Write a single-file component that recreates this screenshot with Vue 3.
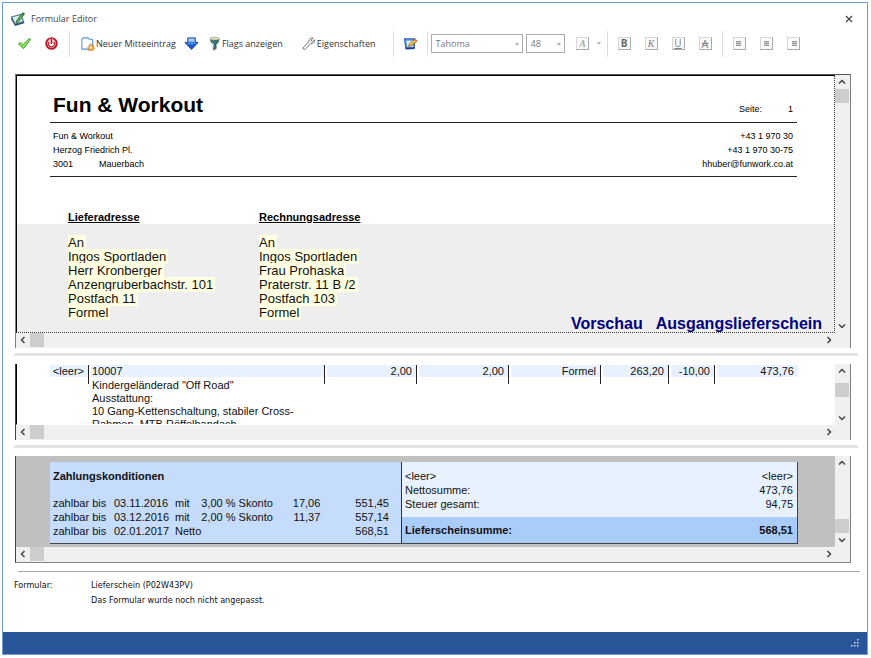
<script setup>
import { ref } from 'vue'

const fontName = ref('Tahoma')
const fontSize = ref('48')

const delivery = ['An', 'Ingos Sportladen', 'Herr Kronberger', 'Anzengruberbachstr. 101', 'Postfach 11', 'Formel']
const billing = ['An', 'Ingos Sportladen', 'Frau Prohaska', 'Praterstr. 11 B /2', 'Postfach 103', 'Formel']

const details = [
  'Kindergeländerad "Off Road"',
  'Ausstattung:',
  '10 Gang-Kettenschaltung, stabiler Cross-',
  'Rahmen, MTB Röffelbandach'
]

const terms = [
  { date: '03.11.2016', kind: 'mit', rate: '3,00 % Skonto', discount: '17,06', amount: '551,45' },
  { date: '03.12.2016', kind: 'mit', rate: '2,00 % Skonto', discount: '11,37', amount: '557,14' },
  { date: '02.01.2017', kind: 'Netto', rate: '', discount: '', amount: '568,51' }
]

const styleButtons = [
  { glyph: 'B', cls: 'bold', label: 'Fett' },
  { glyph: 'K', cls: 'italic', label: 'Kursiv' },
  { glyph: 'U', cls: 'under', label: 'Unterstrichen' },
  { glyph: 'A', cls: 'strike', label: 'Durchgestrichen' }
]
const alignButtons = [
  { x: 2, label: 'Linksbündig' },
  { x: 3, label: 'Zentriert' },
  { x: 4, label: 'Rechtsbündig' }
]
</script>

<template>
  <main class="window">
    <header class="titlebar">
      <svg class="app-icon" viewBox="0 0 16 16" aria-hidden="true">
        <path d="M1.500 6 10.500 3.500l3 7L5 13z" fill="#dcecf0" stroke="#4f7a8a" stroke-width="1.200" />
        <path d="M1.500 6.500 5 13.300l9-2.600.3 1.500L5 15 1 8z" fill="#2f5364" />
        <path d="M6.500 9.800 11.500 3l2 1.400-5 6.300-2.500 1z" fill="#5eb45a" stroke="#2c6a3a" stroke-width=".8" />
        <path d="m11.500 3 1.300-1.800 2.400 1.500-1.700 1.700z" fill="#2e6f45" />
      </svg>
      <h1>Formular Editor</h1>
      <button class="close" aria-label="Schließen">
        <svg viewBox="0 0 8 8"><path d="m1 1 6 6M7 1 1 7" stroke="#444" stroke-width="1.200" /></svg>
      </button>
    </header>

    <nav class="toolbar" aria-label="Werkzeuge">
      <button class="tool" aria-label="Übernehmen">
        <svg viewBox="0 0 16 16"><path d="m1.500 8.500 2.200-1.700 2.800 2.500L13 2.500l1.500 1.200L7 13.500z" fill="#8be35c" stroke="#2f9a2b" stroke-width="1" stroke-linejoin="round" /></svg>
      </button>
      <button class="tool" aria-label="Beenden">
        <svg viewBox="0 0 16 16">
          <circle cx="8" cy="8" r="5.600" fill="#fff" stroke="#b81e2c" stroke-width="2.200" />
          <path d="M5.700 6a3.200 3.200 0 1 0 4.600 0" fill="none" stroke="#c9212f" stroke-width="1.300" />
          <path d="M8 3v5.500" stroke="#fff" stroke-width="3.600" />
          <path d="M8 2.500v6" stroke="#b81e2c" stroke-width="1.900" />
        </svg>
      </button>
      <span class="sep first"></span>
      <button class="tool text">
        <svg viewBox="0 0 16 16">
          <path d="M2 14V3.500L3.500 2h5L10 3.500h3.500V14z" fill="#fbfdff" stroke="#5a93cf" stroke-width="1.100" stroke-linejoin="round" />
          <path d="m11.500 8 1.100 2 2.200-.5-.5 2.200 1.700 1.300-2 1-.1 2-2.400-.9-2.300.9.200-2.300-1.700-1.200 2-1-.3-2 1.700.5z" fill="#eda33b" stroke="#c97b1c" stroke-width=".5" />
          <circle cx="11.600" cy="12.300" r="1.300" fill="#fff3c9" />
        </svg>
        <span>Neuer Mitteeintrag</span>
      </button>
      <button class="tool narrow" aria-label="Nach unten">
        <svg viewBox="0 0 16 16">
          <path d="M4 2h8v5h3L8 14.300 1 7h3z" fill="#3f86ea" stroke="#173f9c" stroke-width="1" stroke-linejoin="round" />
          <path d="M4.700 2.700h6.600v3.300H4.700z" fill="#a5d0ff" />
          <path d="m3 8.300 5 1.500 5-1.500-5 5.200z" fill="#1b50c0" />
        </svg>
      </button>
      <button class="tool text flags">
        <svg viewBox="0 0 16 16">
          <path d="M3.500 3h9.500l-.7 3.500L9.800 9v4.500L6.800 15V9L4.200 6.500z" fill="#33706d" stroke="#2b5553" stroke-width=".6" />
          <path d="M6 7.500V4.500l1.200 4.500v5z" fill="#9cd0ca" />
          <ellipse cx="8.200" cy="2.800" rx="5" ry="1.500" fill="#e4e0b8" stroke="#7f8f82" stroke-width=".6" />
        </svg>
        <span>Flags anzeigen</span>
      </button>
      <button class="tool text props">
        <svg viewBox="0 0 16 16"><path d="M13 2.200 10.800 4.400l.4 1.300 1.300.4L14.500 4c.6 2.500-1.700 4.700-4.200 4l-5.700 6c-1.400 1.200-3.300-.7-2-2.100L8.500 6.300C7.800 3.800 10.500 1.300 13 2.200z" fill="#fff" stroke="#666" stroke-width="1" stroke-linejoin="round" /></svg>
        <span>Eigenschaften</span>
      </button>
      <span class="sep mid"></span>
      <button class="tool" aria-label="Bearbeiten">
        <svg viewBox="0 0 16 16">
          <path d="M1.500 3h11.300l-1 10.500-8.600.3z" fill="#5c9bea" stroke="#1d4fa3" stroke-width="1" />
          <path d="M3.500 5h7.500l-.6 6.500H4.700z" fill="#e7f2ff" />
          <path d="m3 14.200 9.300-.6.200-1.700-9.700.4z" fill="#1d3f88" />
          <path d="m6 11 .7-2.700 6.300-5 1.900 2.200-6.300 5z" fill="#f6c245" stroke="#8b5a12" stroke-width=".8" />
          <path d="m12 4 1.400-1.200 1.900 2.200-1.400 1.200z" fill="#e06d4b" />
        </svg>
      </button>
      <span class="sep"></span>
      <label class="combo wide">
        <select v-model="fontName" aria-label="Schriftart"><option>Tahoma</option></select>
        <i class="caret"></i>
      </label>
      <label class="combo small">
        <select v-model="fontSize" aria-label="Schriftgröße"><option>48</option></select>
        <i class="caret"></i>
      </label>
      <button class="tool color" aria-label="Schriftfarbe"><span class="box color-glyph">A</span></button>
      <button class="drop" aria-label="Farbauswahl"><i class="caret"></i></button>
      <span class="sep"></span>
      <button v-for="b in styleButtons" :key="b.cls" class="tool" :aria-label="b.label">
        <span class="box" :class="b.cls">{{ b.glyph }}</span>
      </button>
      <span class="sep"></span>
      <button v-for="b in alignButtons" :key="b.x" class="tool" :aria-label="b.label">
        <span class="box">
          <svg class="lines" viewBox="0 0 11 11">
            <path :d="`M${b.x} 3h5v5h-5z`" fill="#ccc" />
            <path :d="`M${b.x} 3.500h5M${b.x} 5.500h5M${b.x} 7.500h5`" stroke="#999" />
          </svg>
        </span>
      </button>
    </nav>

    <section class="pane pane-head">
      <div class="view head-view">
        <div class="sheet">
          <div class="company">
            <h2>Fun &amp; Workout</h2>
            <p class="page-no"><span>Seite:</span><span>1</span></p>
          </div>
          <div class="contact">
            <div>
              <p>Fun &amp; Workout</p>
              <p>Herzog Friedrich Pl.</p>
              <p><span class="zip">3001</span>Mauerbach</p>
            </div>
            <div class="right">
              <p>+43 1 970 30</p>
              <p>+43 1 970 30-75</p>
              <p>hhuber@funwork.co.at</p>
            </div>
          </div>
          <div class="labels">
            <h3>Lieferadresse</h3>
            <h3>Rechnungsadresse</h3>
          </div>
        </div>
        <div class="addresses">
          <ul><li v-for="l in delivery" :key="l"><mark>{{ l }}</mark></li></ul>
          <ul><li v-for="l in billing" :key="l"><mark>{{ l }}</mark></li></ul>
          <p class="preview"><span>Vorschau</span><span>Ausgangslieferschein</span></p>
        </div>
      </div>
      <div class="vbar">
        <button aria-label="Nach oben"><svg viewBox="0 0 8 8"><path d="m1 5.500 3-3 3 3" /></svg></button>
        <span class="thumb"></span>
        <span class="track"></span>
        <button aria-label="Nach unten"><svg viewBox="0 0 8 8"><path d="m1 2.500 3 3 3-3" /></svg></button>
      </div>
      <div class="hbar">
        <button aria-label="Nach links"><svg viewBox="0 0 8 8"><path d="m5.500 1-3 3 3 3" /></svg></button>
        <span class="thumb"></span>
        <span class="track"></span>
        <button aria-label="Nach rechts"><svg viewBox="0 0 8 8"><path d="m2.500 1 3 3-3 3" /></svg></button>
      </div>
    </section>

    <div class="splitter"></div>

    <section class="pane pane-items">
      <div class="view items-view">
        <table class="items">
          <colgroup>
            <col class="c-flag"><col><col class="c-num"><col class="c-num"><col class="c-num"><col class="c-price"><col class="c-disc"><col class="c-sum">
          </colgroup>
          <tbody>
            <tr>
              <td class="flag">&lt;leer&gt;</td><td class="name">10007</td><td>2,00</td><td>2,00</td><td>Formel</td><td>263,20</td><td>-10,00</td><td class="sum">473,76</td>
            </tr>
          </tbody>
        </table>
        <div class="details"><p v-for="d in details" :key="d">{{ d }}</p></div>
      </div>
      <div class="vbar">
        <button aria-label="Nach oben"><svg viewBox="0 0 8 8"><path d="m1 5.500 3-3 3 3" /></svg></button>
        <span class="thumb"></span>
        <span class="track"></span>
        <button aria-label="Nach unten"><svg viewBox="0 0 8 8"><path d="m1 2.500 3 3 3-3" /></svg></button>
      </div>
      <div class="hbar">
        <button aria-label="Nach links"><svg viewBox="0 0 8 8"><path d="m5.500 1-3 3 3 3" /></svg></button>
        <span class="thumb"></span>
        <span class="track"></span>
        <button aria-label="Nach rechts"><svg viewBox="0 0 8 8"><path d="m2.500 1 3 3-3 3" /></svg></button>
      </div>
    </section>

    <div class="splitter"></div>

    <section class="pane pane-foot">
      <div class="view foot-view">
        <div class="summary">
          <div class="terms">
            <h3>Zahlungskonditionen</h3>
            <table>
              <tbody>
                <tr v-for="t in terms" :key="t.date">
                  <td class="t-label">zahlbar bis</td><td class="t-date">{{ t.date }}</td><td class="t-kind">{{ t.kind }}</td>
                  <td class="t-rate">{{ t.rate }}</td><td class="t-disc">{{ t.discount }}</td><td class="t-amount">{{ t.amount }}</td>
                </tr>
              </tbody>
            </table>
          </div>
          <div class="totals">
            <dl>
              <div><dt>&lt;leer&gt;</dt><dd>&lt;leer&gt;</dd></div>
              <div><dt>Nettosumme:</dt><dd>473,76</dd></div>
              <div><dt>Steuer gesamt:</dt><dd>94,75</dd></div>
              <div class="grand"><dt>Lieferscheinsumme:</dt><dd>568,51</dd></div>
            </dl>
          </div>
        </div>
      </div>
      <div class="vbar">
        <button aria-label="Nach oben"><svg viewBox="0 0 8 8"><path d="m1 5.500 3-3 3 3" /></svg></button>
        <span class="track"></span>
        <span class="thumb"></span>
        <button aria-label="Nach unten"><svg viewBox="0 0 8 8"><path d="m1 2.500 3 3 3-3" /></svg></button>
      </div>
      <div class="hbar">
        <button aria-label="Nach links"><svg viewBox="0 0 8 8"><path d="m5.500 1-3 3 3 3" /></svg></button>
        <span class="thumb"></span>
        <span class="track"></span>
        <button aria-label="Nach rechts"><svg viewBox="0 0 8 8"><path d="m2.500 1 3 3-3 3" /></svg></button>
      </div>
    </section>

    <section class="info">
      <span>Formular:</span>
      <div>
        <p>Lieferschein (P02W43PV)</p>
        <p>Das Formular wurde noch nicht angepasst.</p>
      </div>
    </section>

    <footer class="status">
      <svg viewBox="0 0 8 8" aria-hidden="true"><path d="M6 0h1.500v1.500H6zM6 3h1.500v1.500H6zM3 3h1.500v1.500H3zM6 6h1.500v1.500H6zM3 6h1.500v1.500H3zM0 6h1.500v1.500H0z" fill="#cfdcf0" /></svg>
    </footer>
  </main>
</template>

<style>
body {
  background: #fff;
}
</style>

<style scoped>
* {
  box-sizing: border-box;
  margin: 0;
  padding: 0;
}
.window {
  display: flex;
  flex-direction: column;
  min-height: calc(100vh - 5px);
  margin: 2px 3px 3px 2px;
  border: 1px solid #6f9bd8;
  background: #fff;
  color: #111;
  font: 11px/14px "Liberation Sans", Arial, sans-serif;
}
button {
  border: 0;
  background: none;
  font: inherit;
  color: inherit;
}
.titlebar {
  display: flex;
  align-items: center;
  height: 31px;
  padding: 0 14px 0 7px;
  font-family: "Open Sans", sans-serif;
  color: #444;
}
.titlebar h1 {
  flex: 1;
  margin-left: 5px;
  font-size: 9px;
  font-weight: 400;
}
.app-icon {
  width: 16px;
  height: 16px;
}
.close {
  display: flex;
  padding: 0;
}
.close svg {
  width: 8px;
  height: 8px;
}
.toolbar {
  display: flex;
  align-items: center;
  height: 19px;
  padding-left: 8px;
  font: 9px/14px "Open Sans", sans-serif;
  color: #333;
}
.tool {
  display: flex;
  flex: none;
  align-items: center;
  justify-content: center;
  width: 27px;
  height: 19px;
}
.tool svg {
  flex: none;
  width: 15px;
  height: 15px;
}
.tool.text {
  width: auto;
  gap: 1px;
  white-space: nowrap;
}
.tool.narrow {
  width: 31px;
}
.tool.flags {
  gap: 0;
}
.tool.props {
  margin-left: 18px;
}
.sep {
  flex: none;
  width: 1px;
  height: 26px;
  margin: 0 3px;
  background: #dcdcdc;
}
.sep.first {
  margin: 0 10px 0 4px;
}
.sep.mid {
  margin-left: 17px;
}
.combo {
  position: relative;
  flex: none;
  height: 19px;
  margin-right: 3px;
}
.combo.wide {
  width: 92px;
}
.combo.small {
  width: 39px;
}
.combo select {
  width: 100%;
  height: 19px;
  padding: 0 4px;
  appearance: none;
  border: 1px solid #ababab;
  border-radius: 0;
  background: #fff;
  color: #777;
  font: 9px/16px "Open Sans", sans-serif;
}
.caret {
  border: 2px solid transparent;
  border-top: 3px solid #b0b0b0;
  border-bottom: 0;
}
.combo .caret {
  position: absolute;
  top: 9px;
  right: 4px;
}
.tool.color {
  width: 24px;
  margin-left: 3px;
}
.drop {
  display: flex;
  width: 9px;
  justify-content: center;
}
.box {
  display: flex;
  align-items: center;
  justify-content: center;
  width: 13px;
  height: 13px;
  border: 1px solid #d6d6d6;
  border-right-color: #a9a9a9;
  border-bottom-color: #a9a9a9;
  background: #fafafa;
  color: #808080;
  font-size: 10px;
  line-height: 11px;
}
.bold {
  font-weight: 700;
  color: #666;
}
.italic {
  font-family: "Liberation Serif", serif;
  font-style: italic;
}
.color-glyph {
  font-family: "Liberation Serif", serif;
  font-style: italic;
  font-weight: 700;
  color: #aaa;
}
.under {
  text-decoration: underline;
}
.strike {
  font-size: 11px;
  text-decoration: line-through;
}
.tool .lines {
  width: 11px;
  height: 11px;
}
.pane {
  display: grid;
  grid-template-columns: minmax(0, 1fr) 15px;
  margin: 0 16px 0 12px;
  border-left: 1px solid #808080;
  border-right: 1px solid #808080;
}
.pane-head {
  margin-top: 21px;
  border-top: 1px solid #555;
}
.view {
  overflow: hidden;
}
.vbar,
.hbar {
  display: flex;
  background: #f0f0f0;
}
.vbar {
  flex-direction: column;
}
.hbar {
  grid-column: 1 / -1;
  height: 15px;
  padding-right: 14px;
}
.vbar button,
.hbar button {
  display: flex;
  flex: none;
  align-items: center;
  justify-content: center;
  width: 14px;
  height: 14px;
}
.vbar svg,
.hbar svg {
  width: 8px;
  height: 8px;
  fill: none;
  stroke: #444;
  stroke-width: 1.500px;
}
.thumb {
  flex: none;
  width: 14px;
  height: 14px;
  background: #cdcdcd;
}
.track {
  flex: 1;
}
.head-view {
  border-top: 1px solid #000;
  border-left: 1px solid #000;
  border-right: 1px dotted #333;
  border-bottom: 1px dotted #333;
}
.sheet {
  padding: 16px 37px 0 33px;
  color: #000;
  font-size: 9px;
}
.company {
  display: flex;
  align-items: center;
  justify-content: space-between;
  padding: 0 4px 4px 3px;
  border-bottom: 1px solid #222;
}
.company h2 {
  font-size: 21px;
  line-height: 26px;
}
.page-no {
  display: flex;
  gap: 26px;
  padding-top: 8px;
}
.contact {
  display: flex;
  justify-content: space-between;
  padding: 6px 4px 5px 3px;
  border-bottom: 1px solid #222;
}
.right {
  text-align: right;
}
.zip {
  display: inline-block;
  width: 46px;
}
.labels,
.addresses {
  display: grid;
  grid-template-columns: 191px 191px minmax(0, 1fr);
}
.labels {
  padding: 33px 0 0 18px;
}
.labels h3 {
  font-size: 11px;
  text-decoration: underline;
}
.addresses {
  padding: 12px 12px 0 51px;
  background: #eee;
  font-size: 13px;
}
.addresses ul {
  padding-bottom: 12px;
  list-style: none;
}
.addresses mark {
  padding-right: 2px;
  background: #ffffe1;
  color: #111;
}
.preview {
  display: flex;
  align-self: end;
  justify-content: flex-end;
  gap: 13px;
  color: #000080;
  font-size: 16px;
  font-weight: 700;
  line-height: 17px;
}
.splitter {
  height: 3px;
  margin: 5px 9px 8px 11px;
  background: #e3e3e3;
}
.pane-items,
.pane-foot {
  border-left-color: #444;
}
.items-view {
  height: 61px;
  padding: 1px 37px 0 33px;
  border-left: 1px solid #000;
  border-bottom: 1px solid #fff;
}
.pane-items .thumb {
  margin: 0;
}
.pane-items .vbar .thumb {
  margin-top: 5px;
}
.items {
  width: 100%;
  table-layout: fixed;
  border-collapse: separate;
  border-spacing: 0;
}
.c-flag {
  width: 38px;
}
.c-num {
  width: 92px;
}
.c-price {
  width: 68px;
}
.c-disc {
  width: 46px;
}
.c-sum {
  width: 84px;
}
.items td {
  height: 19px;
  padding: 0 4px 0 0;
  border-left: 1px solid #222;
  background: linear-gradient(#e8f1ff, #e8f1ff) 2px 0 / 100% 12px no-repeat;
  line-height: 12px;
  text-align: right;
  vertical-align: top;
}
.items td.flag {
  border-left: 0;
  background-position: 0 0;
}
.items td.name {
  padding-left: 3px;
  text-align: left;
}
.details {
  margin-top: -5px;
  padding-left: 42px;
  line-height: 13px;
}
.foot-view {
  padding: 6px 37px 3px 34px;
  background: #c0c0c0;
}
.summary {
  display: grid;
  grid-template-columns: 351fr 396fr;
  border-right: 1px solid #444;
  border-bottom: 1px solid #444;
}
.terms {
  padding: 7px 12px 5px 3px;
  background: #c5dcfc;
}
.terms h3 {
  margin-bottom: 13px;
  font-size: 11px;
}
.terms table {
  width: 100%;
  border-spacing: 0;
}
.t-label,
.t-date {
  width: 61px;
}
.t-kind {
  width: 26px;
}
.t-rate {
  width: 73px;
}
.t-disc {
  width: 46px;
}
.t-disc,
.t-amount {
  text-align: right;
}
.totals {
  border-left: 1px solid #333;
  background: linear-gradient(#e8f1ff 55px, #aaccf8 55px);
}
.totals dl {
  padding: 7px 4px 0 3px;
}
.totals dl div {
  display: flex;
  justify-content: space-between;
}
.totals .grand {
  margin-top: 12px;
  font-weight: 700;
}
.pane-foot {
  border-bottom: 1px solid #808080;
}
.info {
  display: flex;
  flex: 1;
  margin: 8px 7px 0 15px;
  padding-top: 6px;
  border-top: 1px solid #aaa;
  font: 9px/15px "DejaVu Sans Condensed", "DejaVu Sans", sans-serif;
}
.info > span {
  width: 77px;
  margin-left: -4px;
}
.status {
  display: flex;
  align-items: center;
  justify-content: flex-end;
  height: 22px;
  padding-right: 8px;
  background: #2a5699;
}
.status svg {
  width: 8px;
  height: 8px;
}
</style>
